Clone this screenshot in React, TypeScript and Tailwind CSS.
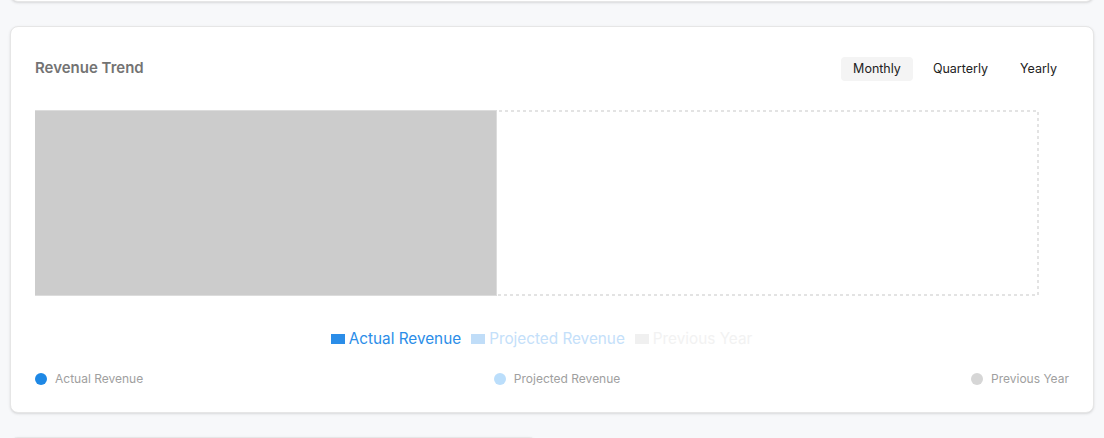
import React from "react";

const periods = ["Monthly", "Quarterly", "Yearly"];

const series = [
  { name: "Actual Revenue", dot: "bg-[#1e88e5]" },
  { name: "Projected Revenue", dot: "bg-[#bbdefb]" },
  { name: "Previous Year", dot: "bg-[#d6d6d6]" },
];

export default function App() {
  return (
    <div className="min-h-screen bg-[#f7f8fa] px-[10px] font-['Inter','Noto_Sans',sans-serif] overflow-hidden">
      <div className="flex flex-col gap-6">
        {/* card above, scrolled out of view */}
        <div className="-mt-[58px] h-[60px] rounded-lg border border-[#e6e6e6] bg-white shadow-sm" />

        {/* Revenue trend */}
        <div className="rounded-lg border border-[#e6e6e6] bg-white px-6 pt-[30px] pb-[25px] shadow-sm">
          <div className="flex items-center justify-between">
            <h3 className="-mt-[2px] text-[15px] font-semibold text-[#737373]">Revenue Trend</h3>
            <div className="flex items-center gap-2">
              {periods.map((p, i) => (
                <button
                  key={p}
                  className={
                    i === 0
                      ? "h-6 rounded px-3 text-[12.5px] text-[#222] bg-[#f4f4f4]"
                      : "h-6 rounded px-3 text-[12.5px] text-[#222]"
                  }
                >
                  {p}
                </button>
              ))}
            </div>
          </div>

          <div className="relative mt-[29px] h-[186px]">
            <svg className="ml-[79px] h-full w-[925px]" viewBox="0 0 925 186">
              <rect x="1" y="1" width="923" height="184" fill="none" stroke="#e3e3e3" strokeWidth="2" strokeDasharray="3 3" />
            </svg>
            <div className="absolute left-0 top-0 h-full w-[462px] border-y border-r border-[#dcdcdc] bg-[#cccccc]" />
          </div>

          <div className="mt-[32px] flex items-center justify-center gap-[10px] pr-[21px] text-[15.3px]">
            <div className="flex items-center gap-1 text-[#2b8de8]">
              <span className="h-[10px] w-[14px] bg-[#2b8de8]" />
              Actual Revenue
            </div>
            <div className="flex items-center gap-1 text-[#c4e0fa]">
              <span className="h-[10px] w-[14px] bg-[#c0ddf8]" />
              Projected Revenue
            </div>
            <div className="flex items-center gap-1 text-[#f2f2f2]">
              <span className="h-[10px] w-[14px] bg-[#f0f0f0]" />
              Previous Year
            </div>
          </div>

          <div className="mt-[20px] flex items-center justify-between">
            {series.map((s) => (
              <div key={s.name} className="flex items-center gap-2">
                <span className={`h-3 w-3 rounded-full ${s.dot}`} />
                <span className="text-xs text-[#a0a0a0]">{s.name}</span>
              </div>
            ))}
          </div>
        </div>

        {/* next card */}
        <div className="h-[60px] w-[527px] rounded-lg border border-[#e6e6e6] bg-white shadow-sm" />
      </div>
    </div>
  );
}
